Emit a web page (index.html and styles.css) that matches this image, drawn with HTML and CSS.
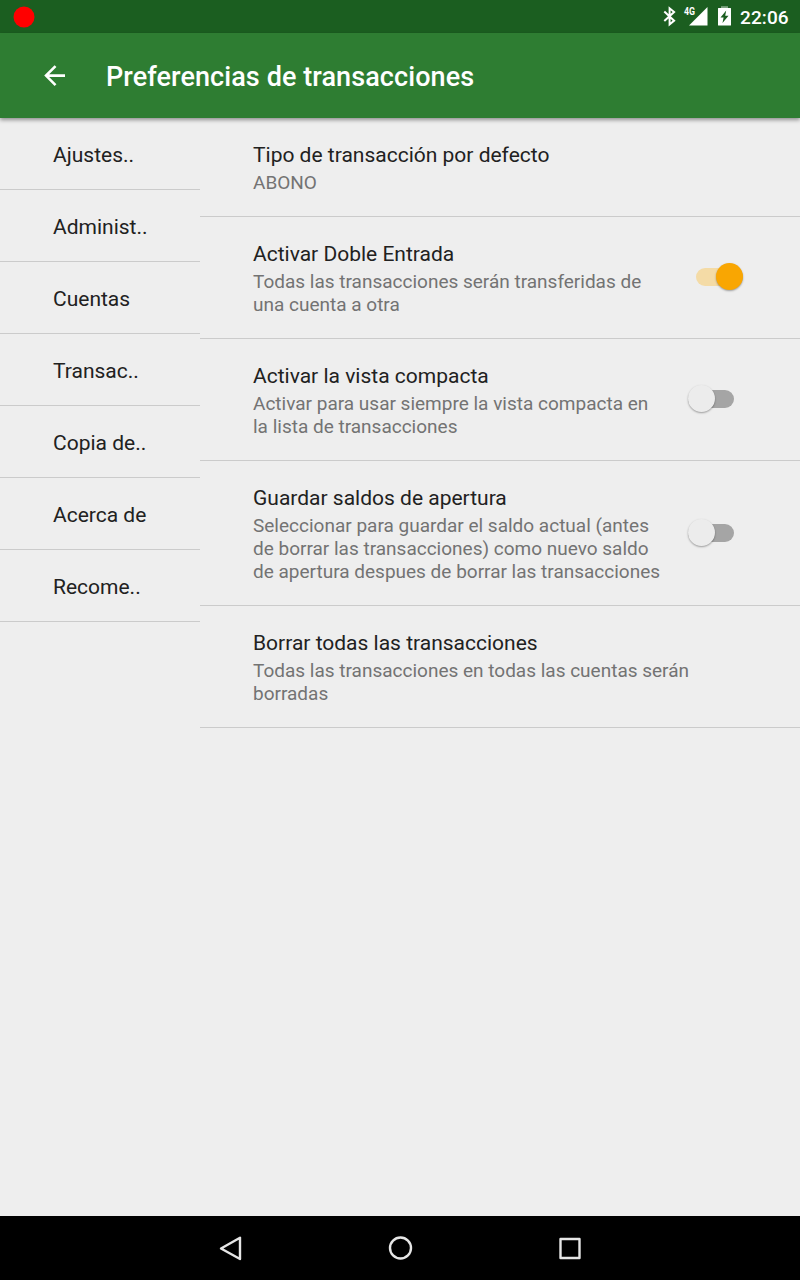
FILE: index.html
```html
<!DOCTYPE html>
<html lang="es">
<head>
<meta charset="utf-8">
<title>Preferencias de transacciones</title>
<link rel="stylesheet" href="styles.css">
</head>
<body>
<div class="screen">
  <header class="status">
    <svg class="record" width="22" height="22" viewBox="0 0 22 22"><circle cx="11" cy="11" r="10.5" fill="#f00"/></svg>
    <svg class="indicators" width="76" height="33" viewBox="0 0 76 33" fill="#fff">
      <path d="M5.300 11.500L15.100 20.700L10.600 24.300V8.300L15.100 12L5.300 21" fill="none" stroke="#fff" stroke-width="2"/>
      <text class="network" x="25" y="15" textLength="11" lengthAdjust="spacingAndGlyphs">4G</text>
      <path d="M48.500 7V25.500H30Z"/>
      <path d="M62 6.200h7v2h-7z" opacity=".45"/>
      <path fill-rule="evenodd" d="M59.500 8h12q.5 0 .5.500v16.500q0 .5-.5.500h-12q-.5 0-.5-.500v-16.500q0-.500.500-.500zM67.200 10.400L61.500 17.500H64.600L63.500 23L69.500 15.700H66.200Z"/>
    </svg>
    <span class="clock">22:06</span>
  </header>
  <div class="appbar">
    <svg class="back" width="32" height="32" viewBox="0 0 32 32" fill="#fff"><path transform="translate(1 0) scale(1.3)" d="M20 11H7.830l5.590-5.590L12 4l-8 8 8 8 1.410-1.410L7.830 13H20v-2z"/></svg>
    <h1 class="title">Preferencias de transacciones</h1>
  </div>
  <main class="content">
    <nav class="sections">
      <div class="section">Ajustes..</div>
      <div class="section">Administ..</div>
      <div class="section">Cuentas</div>
      <div class="section">Transac..</div>
      <div class="section">Copia de..</div>
      <div class="section">Acerca de</div>
      <div class="section">Recome..</div>
    </nav>
    <div class="prefs">
      <div class="pref short">
        <div><div class="name">Tipo de transacción por defecto</div>
        <div class="summary">ABONO</div></div>
      </div>
      <div class="pref">
        <div><div class="name">Activar Doble Entrada</div>
        <div class="summary">Todas las transacciones serán transferidas de<br>una cuenta a otra</div></div>
        <span class="switch on"><span class="thumb"></span></span>
      </div>
      <div class="pref">
        <div><div class="name">Activar la vista compacta</div>
        <div class="summary">Activar para usar siempre la vista compacta en<br>la lista de transacciones</div></div>
        <span class="switch"><span class="thumb"></span></span>
      </div>
      <div class="pref tall">
        <div><div class="name">Guardar saldos de apertura</div>
        <div class="summary">Seleccionar para guardar el saldo actual (antes<br>de borrar las transacciones) como nuevo saldo<br>de apertura despues de borrar las transacciones</div></div>
        <span class="switch"><span class="thumb"></span></span>
      </div>
      <div class="pref">
        <div><div class="name">Borrar todas las transacciones</div>
        <div class="summary">Todas las transacciones en todas las cuentas serán<br>borradas</div></div>
      </div>
    </div>
  </main>
  <footer class="navbar">
    <svg width="32" height="32" viewBox="0 0 32 32"><path d="M26 5.700V27L7 16.500Z"/></svg>
    <svg width="32" height="32" viewBox="0 0 32 32"><circle cx="16.500" cy="16" r="10.500"/></svg>
    <svg width="32" height="32" viewBox="0 0 32 32"><rect x="6.500" y="7" width="19" height="19"/></svg>
  </footer>
</div>
</body>
</html>
```
FILE: styles.css
```css
* { box-sizing: border-box; }
body { margin: 0; font-family: Roboto, sans-serif; }
.screen {
  width: 800px;
  height: 1280px;
  display: flex;
  flex-direction: column;
  background: #eee;
  color: #212121;
}
.status {
  height: 33px;
  flex: none;
  display: flex;
  align-items: center;
  padding: 0 11px 0 13px;
  background: #1b5e20;
  color: #fff;
}
.indicators { margin-left: auto; margin-right: 5px; }
.network { font-size: 10px; font-weight: 700; }
.clock { width: 49px; font-size: 19px; letter-spacing: .1px; font-weight: 500; line-height: 33px; padding-top: 1px; white-space: nowrap; }
.appbar {
  height: 85px;
  flex: none;
  display: flex;
  align-items: center;
  padding-left: 38px;
  background: #2e7d32;
  color: #fff;
  box-shadow: 0 2px 4px rgba(0, 0, 0, .4);
}
.title { margin: 2px 0 0 36px; font-size: 27px; letter-spacing: .08px; font-weight: 500; line-height: 32px; }
.content { flex: 1; display: flex; align-items: flex-start; }
.sections { width: 200px; }
.section {
  height: 72px;
  padding: 1px 0 0 53px;
  font-size: 21px;
  line-height: 73px;
  border-bottom: 1px solid #cbcbcb;
}
.prefs { flex: 1; }
.pref {
  height: 122px;
  display: flex;
  justify-content: space-between;
  padding: 24px 53px 0;
  border-bottom: 1px solid #cbcbcb;
}
.short { height: 99px; }
.tall { height: 145px; }
.name { font-size: 21px; line-height: 27px; }
.summary { padding-top: 2px; font-size: 19px; line-height: 23px; color: #737373; white-space: nowrap; }
.switch {
  width: 46px;
  height: 18px;
  margin: 27px 13px 0 0;
  display: flex;
  align-items: center;
  align-self: flex-start;
  background: #a5a5a5;
  border-radius: 9px;
}
.tall .switch { margin-top: 39px; }
.thumb {
  width: 27px;
  height: 27px;
  margin-bottom: 1px;
  flex: none;
  border-radius: 50%;
  background: #ececec;
  box-shadow: 0 1px 2px rgba(0, 0, 0, .35);
}
.switch.on { width: 47px; background: #f4dba6; justify-content: flex-end; margin-right: 4px; }
.switch.on .thumb { background: #f9a602; }
.navbar {
  height: 64px;
  flex: none;
  display: flex;
  justify-content: space-between;
  align-items: center;
  padding: 0 214px;
  background: #000;
}
.navbar svg { fill: none; stroke: #e6e6e6; stroke-width: 2.4; stroke-linejoin: round; }
```
